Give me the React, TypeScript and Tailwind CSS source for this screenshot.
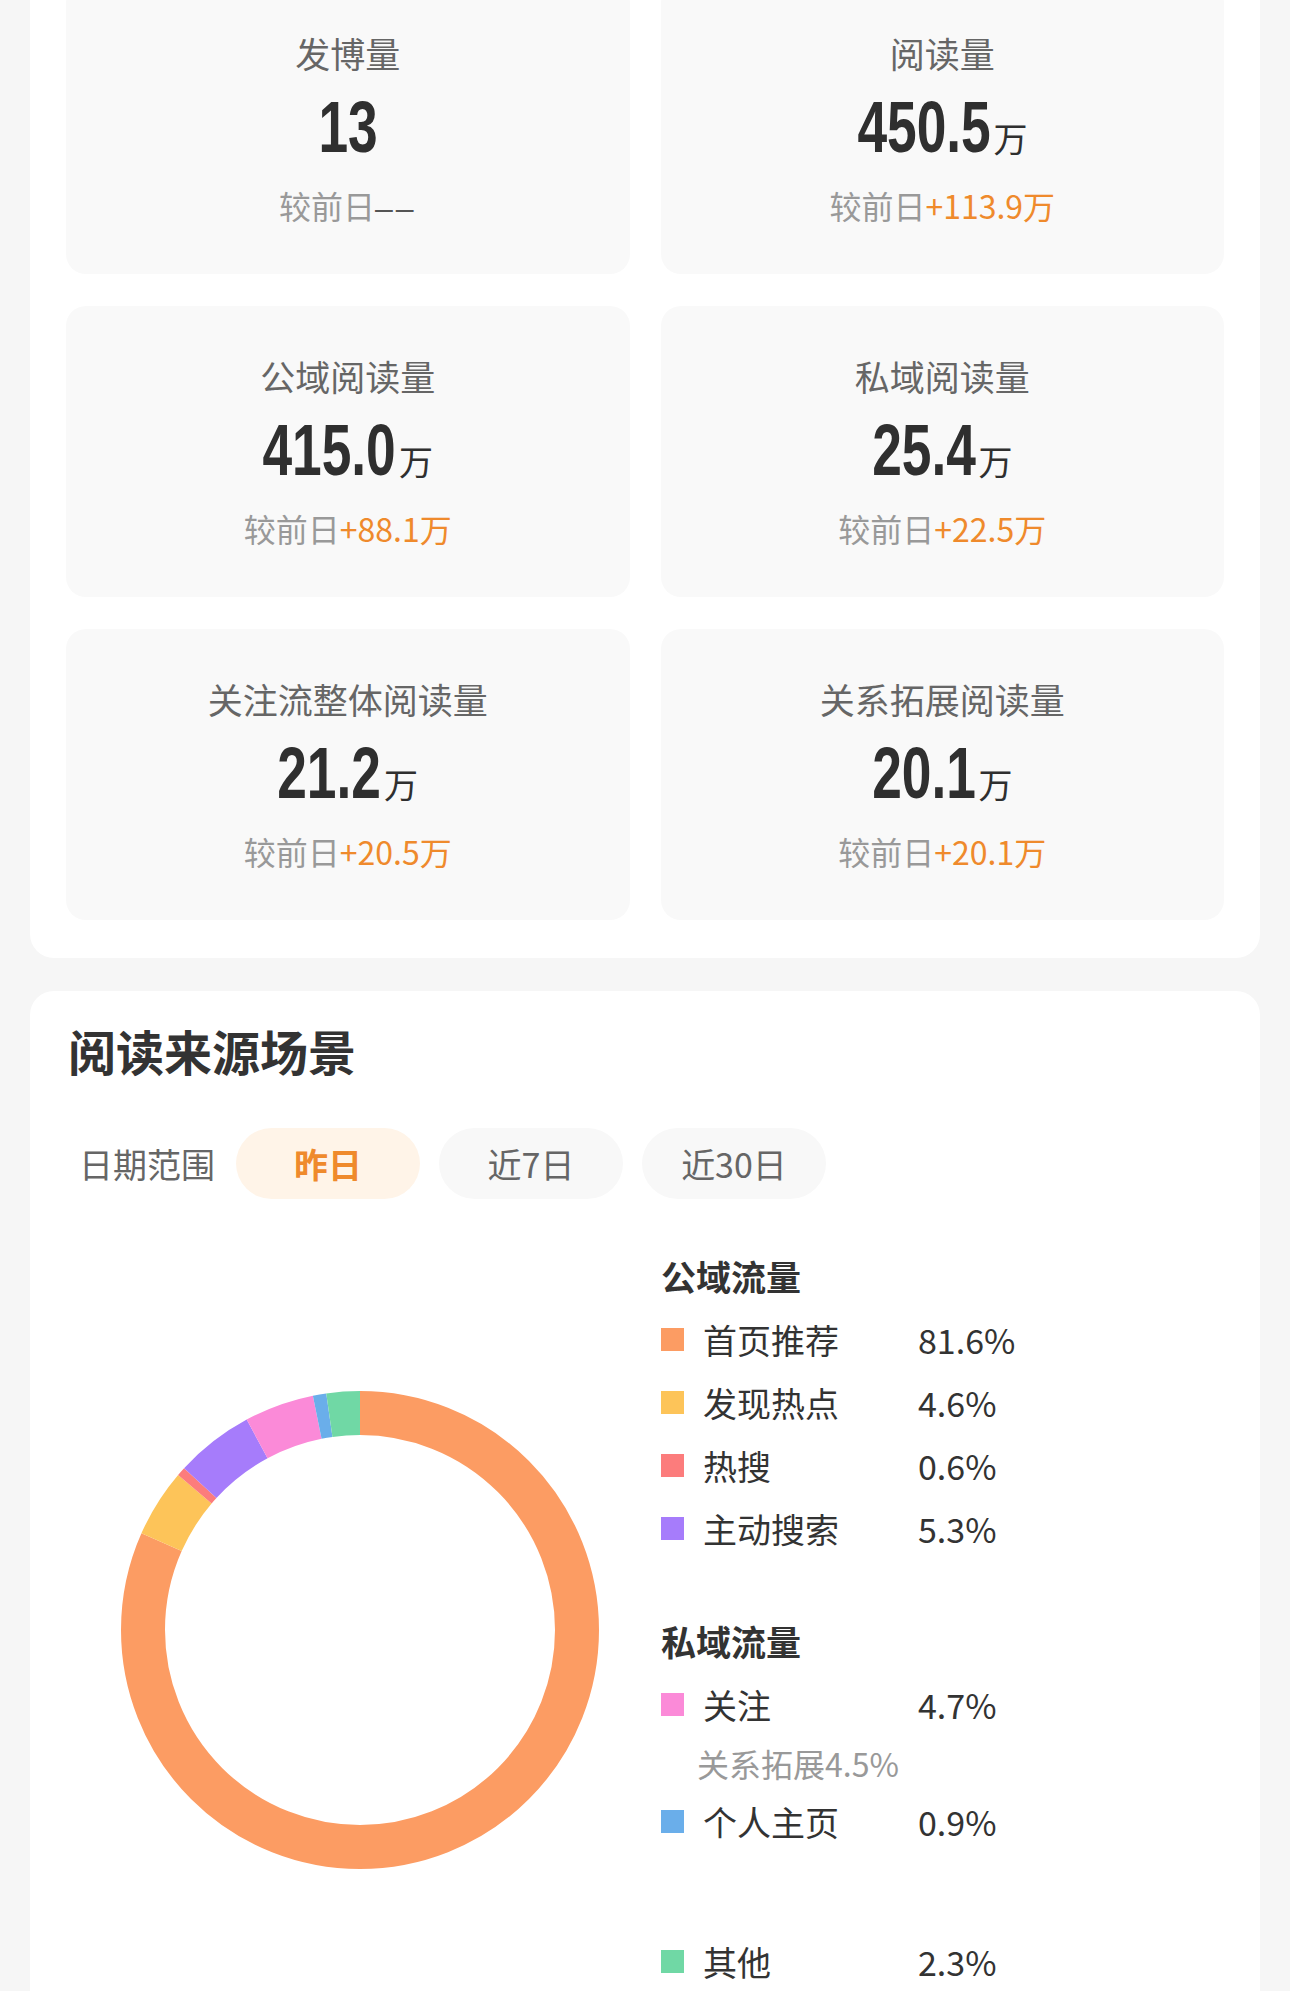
// 数据中心：阅读数据概览 + 阅读来源场景

const cjk = "font-['Noto_Sans_CJK_SC','Noto_Sans',sans-serif]";

type Stat = { title: string; value: string; unit?: string; delta: string };

const stats: Stat[] = [
  { title: "发博量", value: "13", delta: "--" },
  { title: "阅读量", value: "450.5", unit: "万", delta: "+113.9万" },
  { title: "公域阅读量", value: "415.0", unit: "万", delta: "+88.1万" },
  { title: "私域阅读量", value: "25.4", unit: "万", delta: "+22.5万" },
  { title: "关注流整体阅读量", value: "21.2", unit: "万", delta: "+20.5万" },
  { title: "关系拓展阅读量", value: "20.1", unit: "万", delta: "+20.1万" },
];

type Slice = { name: string; pct: number; color: string };

const slices: Slice[] = [
  { name: "首页推荐", pct: 81.6, color: "#fc9c63" },
  { name: "发现热点", pct: 4.6, color: "#fdc459" },
  { name: "热搜", pct: 0.6, color: "#fc7c7c" },
  { name: "主动搜索", pct: 5.3, color: "#a67cfb" },
  { name: "关注", pct: 4.7, color: "#fb8ad8" },
  { name: "个人主页", pct: 0.9, color: "#6aaeea" },
  { name: "其他", pct: 2.3, color: "#70d8a5" },
];

// 数字用窄体：Liberation Sans 横向压缩，左右负边距收回压缩后留下的空白
const SQUEEZE = 0.74;
function Condensed({ text }: { text: string }) {
  const em = [...text].reduce((w, ch) => w + (ch === "." ? 0.278 : 0.556), 0);
  const pull = `${(-em * (1 - SQUEEZE)) / 2}em`;
  return (
    <span
      className="inline-block font-['Liberation_Sans',sans-serif] font-bold text-[72px] leading-[74px] scale-x-[0.74] origin-center"
      style={{ marginLeft: pull, marginRight: pull }}
    >
      {text}
    </span>
  );
}

function StatCard({ title, value, unit, delta }: Stat) {
  const flat = delta === "--";
  return (
    <div className="h-[291px] rounded-[20px] bg-[#f9f9f9] flex flex-col items-center pt-[47px]">
      <div className="text-[35px] leading-[46px] text-[#666]">{title}</div>
      <div className="mt-[14px] h-[74px] flex items-baseline text-[#2f2f2f]">
        <Condensed text={value} />
        {unit && <span className="text-[34px] leading-[40px] ml-[3px]">{unit}</span>}
      </div>
      <div className="mt-[21px] text-[32px] leading-[40px] text-[#999]">
        较前日
        {flat ? (
          <span className="font-['Liberation_Sans',sans-serif] text-[#555] tracking-[3px]">––</span>
        ) : (
          <span className="text-[#ef8a2c]">{delta}</span>
        )}
      </div>
    </div>
  );
}

function Donut() {
  const r = 217;
  const c = 2 * Math.PI * r;
  let start = 0;
  return (
    <svg width="478" height="478" viewBox="0 0 478 478">
      <g transform="rotate(-90 239 239)">
        {slices.map((s) => {
          const len = (s.pct / 100) * c;
          const el = (
            <circle
              key={s.name}
              cx="239"
              cy="239"
              r={r}
              fill="none"
              stroke={s.color}
              strokeWidth="44"
              strokeDasharray={`${len} ${c - len}`}
              strokeDashoffset={-start}
            />
          );
          start += len;
          return el;
        })}
      </g>
    </svg>
  );
}

function LegendRow({ name, pct, color }: Slice) {
  return (
    <div className="h-[63px] flex items-center text-[34px] text-[#333]">
      <span className="w-[23px] h-[23px]" style={{ backgroundColor: color }} />
      <span className="ml-[19px] w-[215px]">{name}</span>
      <span>{pct.toFixed(1)}%</span>
    </div>
  );
}

export default function App() {
  const pick = (n: string) => slices.find((s) => s.name === n)!;
  return (
    <div className={`${cjk} min-h-screen bg-[#f6f6f6] overflow-hidden pb-[40px]`}>
      {/* 概览卡片 */}
      <div className="-mt-[53px] mx-[30px] bg-white rounded-[24px] grid grid-cols-2 gap-x-[31px] gap-y-[32px] px-[36px] pt-[36px] pb-[38px]">
        {stats.map((s) => (
          <StatCard key={s.title} {...s} />
        ))}
      </div>

      {/* 阅读来源场景 */}
      <div className="mt-[33px] mx-[30px] bg-white rounded-[24px] px-[36px] pt-[29px] pb-[60px]">
        <div className="text-[48px] leading-[60px] font-bold text-[#333] pl-[2px]">阅读来源场景</div>

        <div className="mt-[48px] flex items-center">
          <span className="ml-[13px] mr-[21px] text-[34px] text-[#666]">日期范围</span>
          <div className="flex gap-[19px]">
            <button className="w-[184px] h-[71px] rounded-full bg-[#fff4e8] text-[34px] font-bold text-[#ef8a2c]">昨日</button>
            <button className="w-[184px] h-[71px] rounded-full bg-[#f8f8f8] text-[34px] text-[#666]">近7日</button>
            <button className="w-[184px] h-[71px] rounded-full bg-[#f8f8f8] text-[34px] text-[#666]">近30日</button>
          </div>
        </div>

        <div className="mt-[46px] flex items-start pl-[55px]">
          <div className="mt-[146px] shrink-0">
            <Donut />
          </div>
          <div className="ml-[62px]">
            <div className="h-[63px] flex items-center text-[35px] font-bold text-[#333]">公域流量</div>
            {["首页推荐", "发现热点", "热搜", "主动搜索"].map((n) => (
              <LegendRow key={n} {...pick(n)} />
            ))}
            <div className="mt-[50px] h-[63px] flex items-center text-[35px] font-bold text-[#333]">私域流量</div>
            <LegendRow {...pick("关注")} />
            <div className="h-[54px] flex items-center pl-[36px] text-[32px] text-[#999]">关系拓展4.5%</div>
            <LegendRow {...pick("个人主页")} />
            <div className="mt-[77px]">
              <LegendRow {...pick("其他")} />
            </div>
          </div>
        </div>
      </div>
    </div>
  );
}
